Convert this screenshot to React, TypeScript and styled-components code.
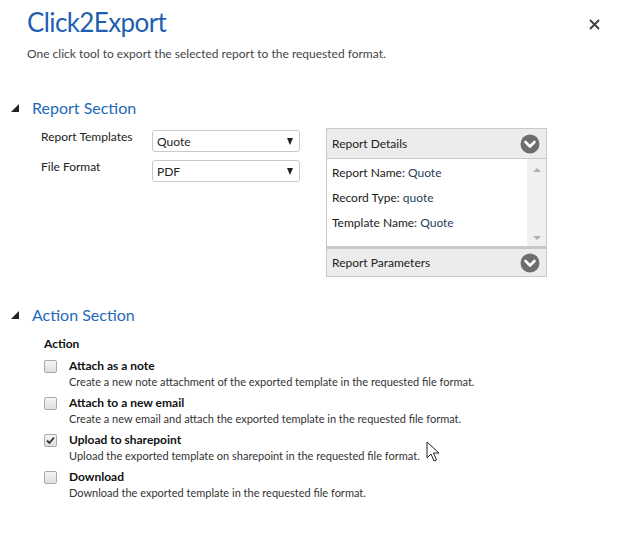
import React from "react";
import styled, { createGlobalStyle } from "styled-components";

const Global = createGlobalStyle`
  html, body { margin: 0; padding: 0; background: #fff; }
  body { font-family: "Segoe UI", Lato, "Open Sans", sans-serif; color: #333; }
  * { box-sizing: border-box; }
`;

const Page = styled.div`
  position: relative;
  width: 619px;
  height: 547px;
  background: #fff;
  overflow: hidden;
`;

const Header = styled.header`
  display: flex;
  justify-content: space-between;
  align-items: flex-start;
  padding: 5px 18px 0 27px;
`;

const TitleBlock = styled.div`
  display: flex;
  flex-direction: column;
`;

const Title = styled.h1`
  margin: 0;
  font-weight: 400;
  font-size: 26px;
  letter-spacing: -0.6px;
  line-height: 34px;
  color: #1f5fb0;
`;

const Subtitle = styled.p`
  margin: 7px 0 0;
  font-size: 12px;
  line-height: 16px;
  color: #444;
`;

const Close = styled.button`
  margin-top: 12px;
  border: 0;
  background: none;
  padding: 0;
  width: 14px;
  height: 14px;
  display: flex;
  align-items: center;
  justify-content: center;
  cursor: pointer;
`;

const Section = styled.section<{ $top: number }>`
  margin-top: ${(p) => p.$top}px;
`;

const SectionHead = styled.div`
  display: flex;
  align-items: center;
  gap: 13px;
  padding-left: 11px;
  height: 22px;
`;

const SectionTitle = styled.h2`
  margin: 0;
  font-weight: 400;
  font-size: 16px;
  line-height: 22px;
  color: #2369b8;
`;

const ReportBody = styled.div`
  display: flex;
  align-items: flex-start;
  padding: 10px 0 0 41px;
`;

const FieldsGrid = styled.div`
  display: grid;
  grid-template-columns: 111px 148px;
  row-gap: 8px;
  padding-top: 1px;
`;

const Label = styled.label`
  font-size: 12px;
  line-height: 16px;
  color: #222;
  margin-top: -1px;
`;

const Select = styled.div`
  height: 22px;
  border: 1px solid #c9c9c9;
  border-radius: 3px;
  display: flex;
  align-items: center;
  justify-content: space-between;
  padding: 0 6px 0 4px;
  font-size: 12px;
  color: #222;
  background: #fff;
`;

const Caret = styled.span`
  width: 0;
  height: 0;
  border-left: 3.5px solid transparent;
  border-right: 3.5px solid transparent;
  border-top: 7px solid #222;
`;

const Panel = styled.div`
  margin-left: 26px;
  margin-top: -1px;
  width: 221px;
  border: 1px solid #c8c8c8;
  display: flex;
  flex-direction: column;
`;

const PanelHeader = styled.div<{ $sep?: boolean }>`
  height: 30px;
  background: #ececec;
  display: flex;
  align-items: center;
  justify-content: space-between;
  padding: 0 6px 0 5px;
  font-size: 12px;
  color: #222;
  border-top: ${(p) => (p.$sep ? "3px solid #c8c8c8" : "0")};
  border-bottom: ${(p) => (p.$sep ? "0" : "1px solid #c8c8c8")};
`;

const PanelBody = styled.div`
  height: 87px;
  display: flex;
`;

const DetailList = styled.div`
  flex: 1;
  display: flex;
  flex-direction: column;
  gap: 9px;
  padding: 6px 5px 0;
`;

const DetailRow = styled.div`
  font-size: 12px;
  line-height: 16px;
  color: #2a3e58;
`;

const DetailKey = styled.span`
  color: #1a1a1a;
`;

const Scrollbar = styled.div`
  width: 19px;
  background: #f0f0f0;
  display: flex;
  flex-direction: column;
  justify-content: space-between;
  align-items: center;
  padding: 9px 0 6px;
`;

const ScrollArrow = styled.span<{ $up?: boolean }>`
  width: 0;
  height: 0;
  border-left: 4px solid transparent;
  border-right: 4px solid transparent;
  ${(p) => (p.$up ? "border-bottom: 4px solid #b0b0b0;" : "border-top: 4px solid #b0b0b0;")}
`;

const ActionBody = styled.div`
  padding: 10px 0 0 44px;
`;

const ActionLabel = styled.div`
  font-size: 12px;
  line-height: 16px;
  font-weight: 700;
  color: #111;
  margin-bottom: 6px;
`;

const OptionList = styled.div`
  display: flex;
  flex-direction: column;
  gap: 5px;
`;

const Option = styled.div`
  display: flex;
  align-items: flex-start;
  gap: 12px;
`;

const Box = styled.span`
  margin-top: 2px;
  width: 13px;
  height: 13px;
  border: 1px solid #a9a9a9;
  border-radius: 2px;
  background: linear-gradient(#f6f6f6, #dedede);
  display: flex;
  align-items: center;
  justify-content: center;
  flex: none;
`;

const OptionText = styled.div`
  display: flex;
  flex-direction: column;
`;

const OptionTitle = styled.div`
  font-size: 12px;
  line-height: 16px;
  font-weight: 700;
  color: #111;
`;

const OptionDesc = styled.div`
  font-size: 11px;
  line-height: 16px;
  color: #333;
`;

const Cursor = styled.svg`
  position: absolute;
  left: 426px;
  top: 441px;
`;

const Triangle = () => (
  <svg width="8" height="8" viewBox="0 0 8 8">
    <polygon points="8,0 8,8 0,8" fill="#222" />
  </svg>
);

const Chevron = () => (
  <svg width="20" height="20" viewBox="0 0 20 20">
    <circle cx="10" cy="10" r="9.5" fill="#6e6e6e" />
    <polyline points="5.5,8 10,12.5 14.5,8" fill="none" stroke="#fff" strokeWidth="2.6" strokeLinecap="round" strokeLinejoin="round" />
  </svg>
);

const options = [
  { title: "Attach as a note", desc: "Create a new note attachment of the exported template in the requested file format.", checked: false },
  { title: "Attach to a new email", desc: "Create a new email and attach the exported template in the requested file format.", checked: false },
  { title: "Upload to sharepoint", desc: "Upload the exported template on sharepoint in the requested file format.", checked: true },
  { title: "Download", desc: "Download the exported template in the requested file format.", checked: false },
];

export default function App() {
  return (
    <Page>
      <Global />
      <Header>
        <TitleBlock>
          <Title>Click2Export</Title>
          <Subtitle>One click tool to export the selected report to the requested format.</Subtitle>
        </TitleBlock>
        <Close aria-label="Close">
          <svg width="11" height="11" viewBox="0 0 11 11">
            <path d="M1 1 L10 10 M10 1 L1 10" stroke="#444" strokeWidth="2" />
          </svg>
        </Close>
      </Header>

      <Section $top={35}>
        <SectionHead>
          <Triangle />
          <SectionTitle>Report Section</SectionTitle>
        </SectionHead>
        <ReportBody>
          <FieldsGrid>
            <Label>Report Templates</Label>
            <Select>
              Quote <Caret />
            </Select>
            <Label>File Format</Label>
            <Select>
              PDF <Caret />
            </Select>
          </FieldsGrid>
          <Panel>
            <PanelHeader>
              Report Details
              <Chevron />
            </PanelHeader>
            <PanelBody>
              <DetailList>
                <DetailRow>
                  <DetailKey>Report Name:</DetailKey> Quote
                </DetailRow>
                <DetailRow>
                  <DetailKey>Record Type:</DetailKey> quote
                </DetailRow>
                <DetailRow>
                  <DetailKey>Template Name:</DetailKey> Quote
                </DetailRow>
              </DetailList>
              <Scrollbar>
                <ScrollArrow $up />
                <ScrollArrow />
              </Scrollbar>
            </PanelBody>
            <PanelHeader $sep>
              Report Parameters
              <Chevron />
            </PanelHeader>
          </Panel>
        </ReportBody>
      </Section>

      <Section $top={27}>
        <SectionHead>
          <Triangle />
          <SectionTitle>Action Section</SectionTitle>
        </SectionHead>
        <ActionBody>
          <ActionLabel>Action</ActionLabel>
          <OptionList>
            {options.map((o) => (
              <Option key={o.title}>
                <Box>
                  {o.checked && (
                    <svg width="9" height="9" viewBox="0 0 9 9">
                      <path d="M1 4.5 L3.5 7 L8 1.5" fill="none" stroke="#333" strokeWidth="1.8" />
                    </svg>
                  )}
                </Box>
                <OptionText>
                  <OptionTitle>{o.title}</OptionTitle>
                  <OptionDesc>{o.desc}</OptionDesc>
                </OptionText>
              </Option>
            ))}
          </OptionList>
        </ActionBody>
      </Section>

      <Cursor width="14" height="22" viewBox="0 0 14 22">
        <path d="M1 1 L1 17 L5 13 L8 20 L10.5 19 L7.5 12 L13 12 Z" fill="#fff" stroke="#222" strokeWidth="1" strokeLinejoin="round" />
      </Cursor>
    </Page>
  );
}
